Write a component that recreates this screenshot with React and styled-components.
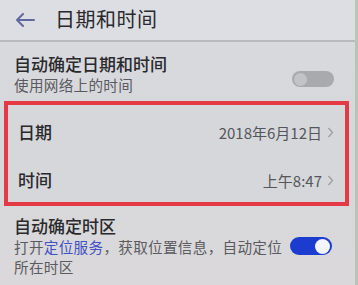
import React from 'react';
import styled, { createGlobalStyle } from 'styled-components';

const Global = createGlobalStyle`
  html, body {
    margin: 0;
    padding: 0;
  }
  body {
    font-family: "Noto Sans CJK SC", "Noto Sans", sans-serif;
  }
`;

const Screen = styled.div`
  width: 358px;
  height: 285px;
  overflow: hidden;
  background: linear-gradient(180deg, #d9dbe0 0%, #d6d7db 45%, #dad8da 100%);
  color: #2b2b2d;
  box-sizing: border-box;
  border-right: 3px solid #b9c4b4;
`;

const Header = styled.div`
  height: 42px;
  display: flex;
  align-items: center;
  padding-left: 15px;
  gap: 20px;
  border-bottom: 2px solid #b9babe;
  box-sizing: border-box;
  background: #dcdee3;
`;

const Title = styled.div`
  font-size: 20px;
  line-height: 1;
  color: #2a2a2c;
  margin-top: -3px;
  letter-spacing: 0.5px;
`;

const Row = styled.div`
  display: flex;
  align-items: center;
  justify-content: space-between;
  padding: ${p => p.$pad || '0 21px 0 14px'};
  min-height: ${p => p.$h || 'auto'};
  box-sizing: border-box;
`;

const TextCol = styled.div`
  display: flex;
  flex-direction: column;
`;

const Label = styled.div`
  font-size: 17px;
  line-height: 22px;
  font-weight: 500;
  color: #2a2a2c;
`;

const Sub = styled.div`
  font-size: 14.6px;
  line-height: 20px;
  color: #5a5b5f;
  letter-spacing: 0.3px;
`;

const Link = styled.span`
  color: #4150c4;
`;

const Highlight = styled.div`
  margin: 0 6px 0 4px;
  border: 4px solid #e33a45;
  padding-top: 3px;
  height: 105px;
  box-sizing: border-box;
  background: #d6d7db;
`;

const Value = styled.div`
  display: flex;
  align-items: center;
  gap: 5px;
  font-size: 15px;
  color: #55565a;
`;

const Toggle = styled.div`
  width: 42px;
  height: ${p => (p.$on ? '18px' : '16px')};
  margin-top: ${p => (p.$on ? '0' : '10px')};
  border-radius: 10px;
  background: ${p => (p.$on ? '#1b3ccf' : '#a9aaad')};
  display: flex;
  align-items: center;
  justify-content: ${p => (p.$on ? 'flex-end' : 'flex-start')};
  padding: 0 2px;
  box-sizing: border-box;
  flex-shrink: 0;
`;

const Knob = styled.div`
  width: ${p => (p.$on ? '15px' : '13px')};
  height: ${p => (p.$on ? '15px' : '13px')};
  border-radius: 50%;
  background: ${p => (p.$on ? '#f4f5f8' : '#c2c3c6')};
`;

const Chevron = () => (
  <svg width="7" height="11" viewBox="0 0 7 11">
    <path d="M1.5 1 L5.5 5.5 L1.5 10" fill="none" stroke="#9d9ea2" strokeWidth="1.3" />
  </svg>
);

const BackArrow = () => (
  <svg width="20" height="14" viewBox="0 0 20 14">
    <path d="M19 7 H2 M8 1 L2 7 L8 13" fill="none" stroke="#5f6a9c" strokeWidth="2" strokeLinecap="round" strokeLinejoin="round" />
  </svg>
);

export default function App() {
  return (
    <Screen>
      <Global />
      <Header>
        <BackArrow />
        <Title>日期和时间</Title>
      </Header>

      <Row $pad="11px 21px 6px 14px">
        <TextCol>
          <Label>自动确定日期和时间</Label>
          <Sub>使用网络上的时间</Sub>
        </TextCol>
        <Toggle>
          <Knob />
        </Toggle>
      </Row>

      <Highlight>
        <Row $pad="0 11px 0 10px" $h="48px">
          <Label>日期</Label>
          <Value>2018年6月12日<Chevron /></Value>
        </Row>
        <Row $pad="0 11px 0 10px" $h="48px">
          <Label>时间</Label>
          <Value>上午8:47<Chevron /></Value>
        </Row>
      </Highlight>

      <Row $pad="9px 23px 0 14px">
        <TextCol>
          <Label>自动确定时区</Label>
          <Sub>打开<Link>定位服务</Link>，获取位置信息，自动定位<br />所在时区</Sub>
        </TextCol>
        <Toggle $on>
          <Knob $on />
        </Toggle>
      </Row>
    </Screen>
  );
}
